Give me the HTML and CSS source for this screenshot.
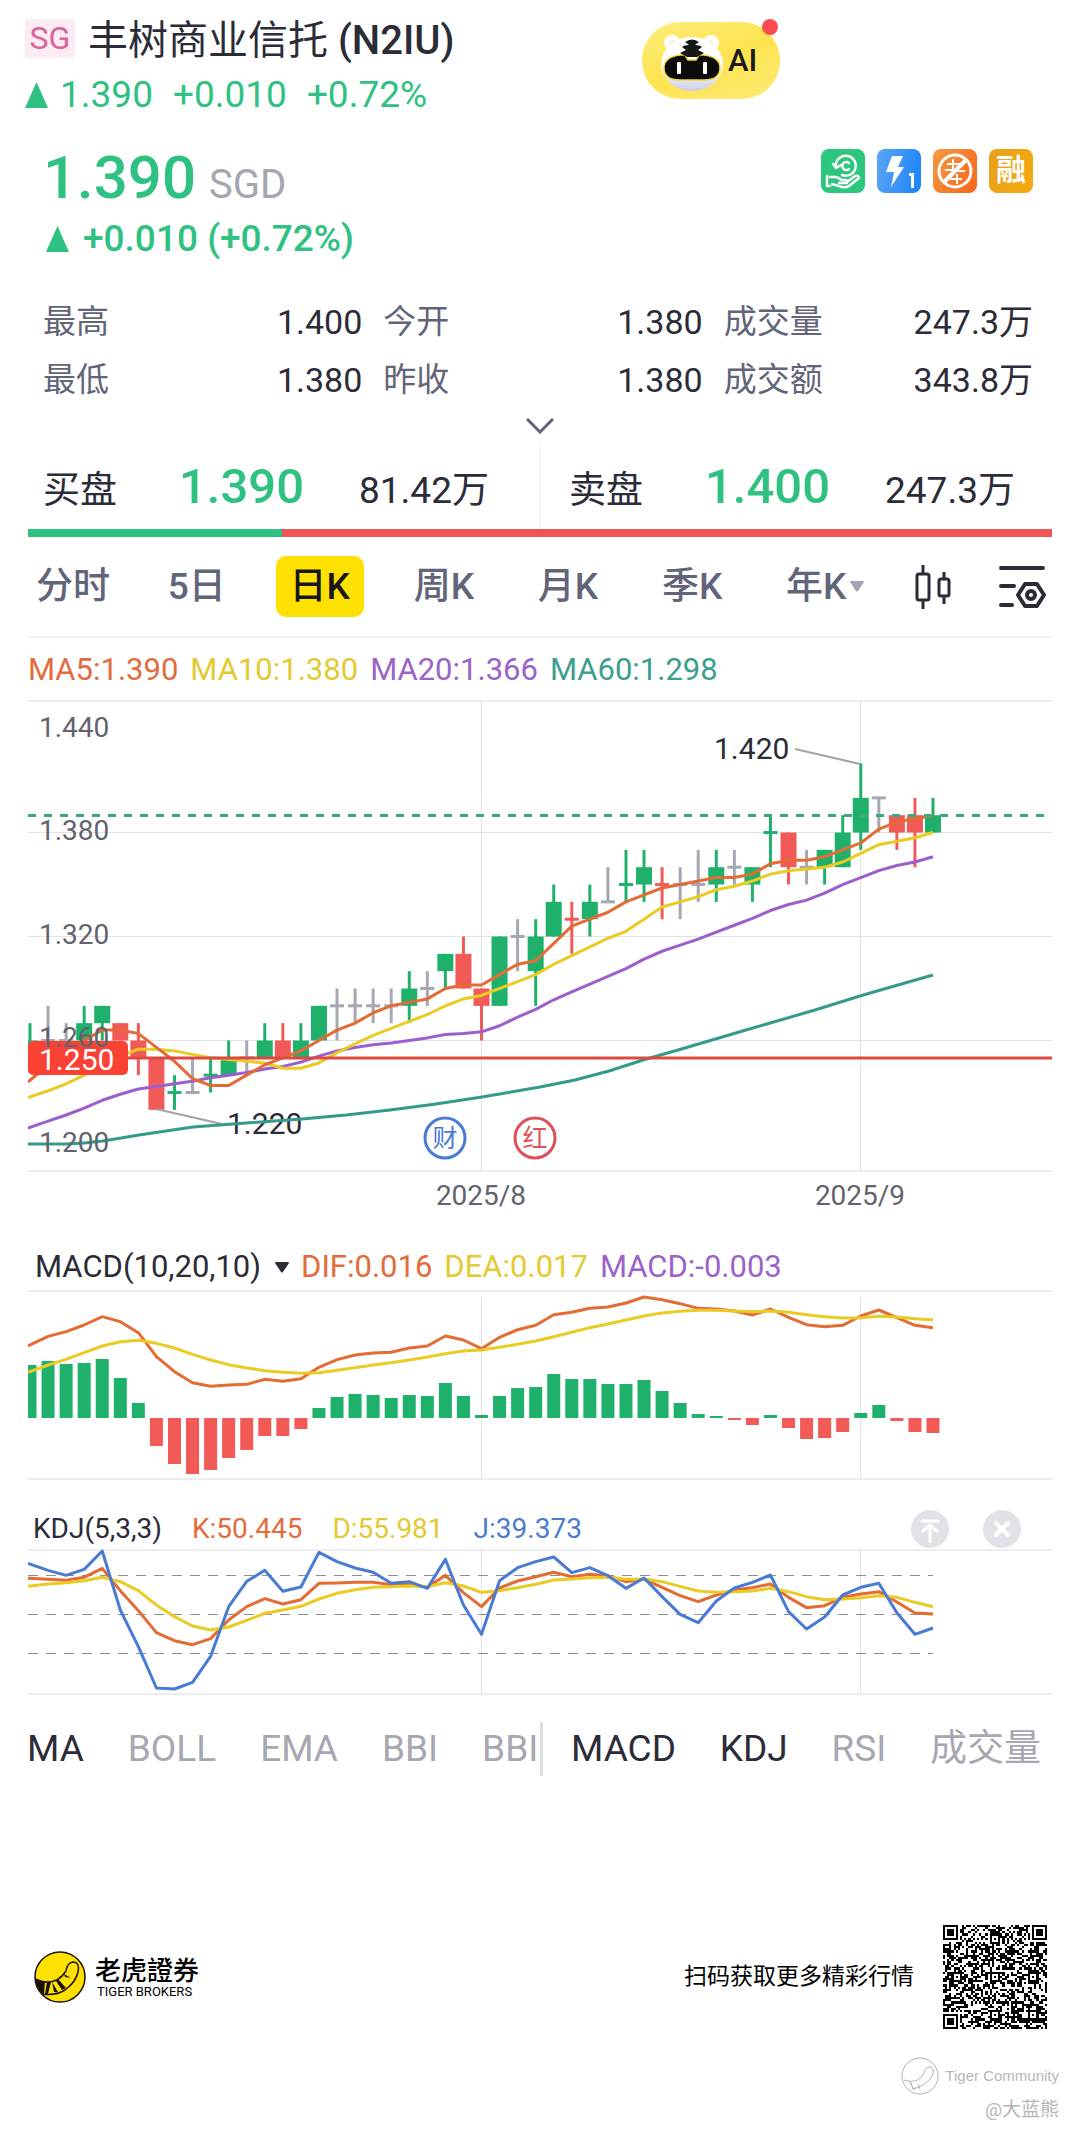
FILE: index.html
```html
<!DOCTYPE html>
<html lang="zh-CN">
<head>
<meta charset="utf-8">
<meta name="viewport" content="width=device-width, initial-scale=1">
<title>丰树商业信托 (N2IU)</title>
<link rel="stylesheet" href="styles.css">
</head>
<body>
<header class="header">
  <div class="header-info">
    <div class="title-row">
      <span class="market">SG</span>
      <h1 class="title">丰树商业信托 <b>(N2IU)</b></h1>
    </div>
    <div class="ticker up">
      <svg class="arrow" viewBox="0 0 23 26" aria-hidden="true"><path d="M11.500 0 23 26H0z"/></svg>
      <span>1.390</span><span>+0.010</span><span>+0.72%</span>
    </div>
  </div>
  <button class="ai" type="button">
    <svg class="ai-bear" viewBox="0 0 64 64" aria-hidden="true">
      <defs>
        <linearGradient id="fur" x1="0" y1="0" x2="0" y2="1"><stop offset="0.500" stop-color="#fff"/><stop offset="1" stop-color="#cfcde6"/></linearGradient>
      </defs>
      <circle cx="12" cy="14" r="8" fill="#fff"/><circle cx="51" cy="14" r="8" fill="#fff"/>
      <circle cx="13" cy="15" r="4" fill="#f6f2e2"/><circle cx="50" cy="15" r="4" fill="#f6f2e2"/>
      <ellipse cx="32" cy="35" rx="31" ry="27" fill="url(#fur)"/>
      <path d="M20 26h5l3 5h8l3-5h5q16 2 16 13 0 12-16 12H20Q4 51 4 39q0-11 16-13z" fill="#0b0b0b" stroke="#f0d93a" stroke-width="1.500"/>
      <path d="M25 13q7-5 14 0l-4 3q5 0 7 2l-4 3 6 3-7 4H27l-7-4 6-3-4-3q2-2 7-2z" fill="#161616"/>
      <rect x="17" y="33" width="4" height="12" rx="1" fill="#fff"/><rect x="43" y="33" width="4" height="12" rx="1" fill="#fff"/>
    </svg>
    <span>AI</span>
    <i class="dot"></i>
  </button>
</header>

<main>
  <section class="quote">
    <div>
      <div class="price up"><span>1.390</span><small>SGD</small></div>
      <div class="change up">
        <svg class="arrow" viewBox="0 0 23 26" aria-hidden="true"><path d="M11.500 0 23 26H0z"/></svg>
        <span>+0.010 (+0.72%)</span>
      </div>
    </div>
    <div class="badges">
      <span class="badge badge-green"><svg viewBox="0 0 44 44" fill="none" stroke="#fff" stroke-width="2.500" stroke-linecap="round" stroke-linejoin="round"><path d="M15 19a10 10 0 1 1 6 7M12 15l3 4 5-3"/><path d="M28 14a4 4 0 1 0 0 6"/><path d="M6 27v10h3M9 28h5q4 0 6 3h4q3 0 2 3h-8M26 33l8-6q4-1 4 2L28 37q-3 2-7 1l-10-3"/></svg></span>
      <span class="badge badge-blue"><svg viewBox="0 0 44 44"><path d="M15 7h11l-5 11h6L14 38l3-15H9z" fill="#fff"/><path d="M32 24h5v15h-3V27h-2z" fill="#fff"/></svg></span>
      <span class="badge badge-orange"><svg viewBox="0 0 44 44" fill="none" stroke="#fff" stroke-width="3"><path d="M14 15h14M12 21h8M25 22h7M20 10v12M17 30h12M24 25v10" stroke-width="2"/><circle cx="22" cy="22" r="16"/><path d="M33 11 11 33" stroke-width="4"/></svg></span>
      <span class="badge badge-gold">融</span>
    </div>
  </section>

  <dl class="stats">
    <div><dt>最高</dt><dd>1.400</dd></div>
    <div><dt>今开</dt><dd>1.380</dd></div>
    <div><dt>成交量</dt><dd>247.3万</dd></div>
    <div><dt>最低</dt><dd>1.380</dd></div>
    <div><dt>昨收</dt><dd>1.380</dd></div>
    <div><dt>成交额</dt><dd>343.8万</dd></div>
  </dl>
  <button class="expand" type="button" aria-label="展开">
    <svg viewBox="0 0 28 16" width="28" height="16"><path d="M1 1l13 13L27 1" fill="none" stroke="#62647a" stroke-width="3"/></svg>
  </button>

  <section class="book">
    <div class="side"><span>买盘</span><strong class="up">1.390</strong><span>81.42万</span></div>
    <div class="side"><span>卖盘</span><strong class="up">1.400</strong><span>247.3万</span></div>
  </section>
  <div class="ratio"><span class="ratio-buy"></span><span class="ratio-sell"></span></div>

  <nav class="periods">
    <button type="button">分时</button>
    <button type="button">5日</button>
    <button type="button" class="active">日K</button>
    <button type="button">周K</button>
    <button type="button">月K</button>
    <button type="button">季K</button>
    <button type="button">年K<svg class="caret" viewBox="0 0 14 11" aria-hidden="true"><path d="M1 0h12q1 0 1 1L8 10q-1 1-2 0L0 1q0-1 1-1z" fill="#a3a4b0"/></svg></button>
    <button type="button" class="tool" aria-label="K线样式"><svg viewBox="0 0 38 44" width="38" height="44" fill="none" stroke="#2b2c38" stroke-width="3"><rect x="3" y="9" width="12" height="26" rx="2"/><path d="M9 0v9M9 35v9M30 7v7M30 31v8"/><rect x="25" y="14" width="10" height="17" rx="2"/></svg></button>
    <button type="button" class="tool" aria-label="图表设置"><svg viewBox="0 0 48 46" width="48" height="46" fill="none" stroke="#2b2c38" stroke-width="4" stroke-linecap="round" stroke-linejoin="round"><path d="M3 4h42M3 22h13M3 41h11"/><path d="M27 20h12l7 11-7 11H27l-7-11z"/><circle cx="33" cy="31" r="4"/></svg></button>
  </nav>

  <div class="legend legend-ma">
    <span class="c-orange">MA5:1.390</span><span class="c-yellow">MA10:1.380</span><span class="c-purple">MA20:1.366</span><span class="c-teal">MA60:1.298</span>
  </div>
  <svg class="chart" id="kline" viewBox="28 700 1024 549">
    <path class="grid" d="M28 832.500H1052M28 936.500H1052M28 1040.500H1052M481.500 701V1171M860.500 701V1171"/>
    <path class="frame" d="M28 701H1052M28 1171H1052"/>
    <g id="candles"></g>
    <g class="extreme"><path d="M795 749 860 764M156 1109 222 1124"/><text x="714" y="759">1.420</text><text x="227" y="1134">1.220</text></g>
    <g id="averages"></g>
    <path class="last" d="M28 815.500H1045"/>
    <path class="alert" d="M28 1058H1052"/>
    <rect x="28" y="1041" width="100" height="34" rx="5" fill="#fa4234"/>
    <g class="axis"><text x="39" y="737">1.440</text><text x="39" y="840">1.380</text><text x="39" y="944">1.320</text><text x="39" y="1047">1.260</text><text x="39" y="1152">1.200</text></g>
    <text class="tag" x="39" y="1070">1.250</text>
    <g class="axis date"><text x="481" y="1205">2025/8</text><text x="860" y="1205">2025/9</text></g>
    <g class="event event-blue"><circle cx="445" cy="1138" r="20"/><text x="445" y="1147">财</text></g>
    <g class="event event-red"><circle cx="535" cy="1138" r="20"/><text x="535" y="1147">红</text></g>
  </svg>

  <div class="legend legend-macd">
    <button type="button" class="indicator">MACD(10,20,10)<svg class="caret" viewBox="0 0 14 11" aria-hidden="true"><path d="M1 0h12q1 0 1 1L8 10q-1 1-2 0L0 1q0-1 1-1z" fill="#2b2c38"/></svg></button>
    <span class="c-orange">DIF:0.016</span><span class="c-yellow">DEA:0.017</span><span class="c-purple">MACD:-0.003</span>
  </div>
  <svg class="chart" id="macd" viewBox="28 1285 1024 225">
    <path class="grid" d="M481.500 1297V1479M860.500 1297V1479"/>
    <path class="frame" d="M28 1291H1052M28 1479H1052"/>
    <g id="macd-data"></g>
  </svg>

  <div class="legend legend-kdj">
    <span class="c-dark">KDJ(5,3,3)</span><span class="c-orange">K:50.445</span><span class="c-yellow">D:55.981</span><span class="c-blue">J:39.373</span>
    <div class="actions">
      <button type="button" aria-label="置顶"><svg viewBox="0 0 38 38"><circle cx="19" cy="19" r="19" fill="#e1e1e7"/><path d="M11 11h16M19 32V16M12 21l7-6 7 6" fill="none" stroke="#fff" stroke-width="3" stroke-linecap="round"/></svg></button>
      <button type="button" aria-label="关闭"><svg viewBox="0 0 38 38"><circle cx="19" cy="19" r="19" fill="#e1e1e7"/><path d="M13 13l12 12M25 13 13 25" fill="none" stroke="#fff" stroke-width="4" stroke-linecap="round"/></svg></button>
    </div>
  </div>
  <svg class="chart" id="kdj" viewBox="28 1548 1024 174">
    <path class="grid" d="M481.500 1551V1695M860.500 1551V1695"/>
    <path class="frame" d="M28 1550H1052M28 1694H1052"/>
    <path class="level" d="M28 1575.500H933M28 1614.500H933M28 1653.500H933"/>
    <g id="kdj-data"></g>
  </svg>

  <nav class="indicators">
    <div class="main-set">
      <button type="button" class="on">MA</button><button type="button">BOLL</button><button type="button">EMA</button><button type="button">BBI</button><button type="button">BBI</button>
    </div>
    <div class="sub-set">
      <button type="button" class="on">MACD</button><button type="button" class="on">KDJ</button><button type="button">RSI</button><button type="button">成交量</button>
    </div>
  </nav>
</main>

<footer class="footer">
  <svg class="logo" viewBox="0 0 52 52" aria-hidden="true">
    <circle cx="26" cy="26" r="25" fill="#ffe100" stroke="#1b1200" stroke-width="1.500"/>
    <path d="M2 29Q22 36 32 20q1-8 7-9 7 0 5 10-2 10-13 18-10 6-22 4-5-6-7-14z" fill="#ffe100" stroke="#1b1200" stroke-width="1.500"/>
    <path d="M1 27l10 4-1 12q-7-7-9-16zM13 31l4 0-3 12h-3zM18 31l6 10h-4zM24 28l8 9-4 2-6-9zM30 23l7 4-6-1z" fill="#1b1200"/>
  </svg>
  <div class="brand"><b>老虎證券</b><span>TIGER BROKERS</span></div>
  <p class="scan">扫码获取更多精彩行情</p>
  <svg class="qr" id="qr" viewBox="0 0 49 49" shape-rendering="crispEdges" role="img" aria-label="二维码"></svg>
</footer>
<div class="community">
  <div class="community-name">
    <svg viewBox="0 0 38 38" fill="none" stroke="#b0b0b0" stroke-width="1"><circle cx="19" cy="19" r="18"/><path d="M3 23q14 5 20-7 2-7 7-6 4 2 1 9-4 9-19 13l-2-6M17 27l2 5M13 33l-4-8"/></svg>
    <span>Tiger Community</span>
  </div>
  <span class="author">@大蓝熊</span>
</div>
<script src="chart.js"></script>
</body>
</html>
```
FILE: styles.css
```css
* { box-sizing: border-box; }

body {
  margin: 0;
  background: #fff;
  color: #2b2c38;
  font-family: Roboto, "Noto Sans CJK SC", sans-serif;
}

button {
  margin: 0;
  padding: 0;
  border: 0;
  background: none;
  color: inherit;
  font: inherit;
}

svg { display: block; }
h1, p, dl, dd { margin: 0; }

.up { color: #2fc182; }
.arrow { width: 23px; height: 26px; fill: #2fc182; }

.header {
  display: flex;
  justify-content: space-between;
  align-items: flex-start;
  padding: 16px 300px 0 25px;
}
.title-row { display: flex; align-items: center; gap: 13px; height: 50px; }
.market {
  width: 50px;
  height: 39px;
  margin-bottom: 6px;
  border-radius: 4px;
  background: #fdebf3;
  color: #d8649b;
  font-size: 32px;
  line-height: 39px;
  text-align: center;
}
.title { font-size: 40px; line-height: 50px; font-weight: 400; white-space: nowrap; }
.title b { font-weight: 500; }
.ticker {
  display: flex;
  align-items: center;
  gap: 20px;
  margin-top: 8px;
  font-size: 37px;
  line-height: 42px;
}
.ticker .arrow { margin-right: -8px; }

.ai {
  position: relative;
  display: flex;
  align-items: center;
  gap: 4px;
  width: 138px;
  height: 77px;
  margin-top: 6px;
  padding-left: 18px;
  border-radius: 38px;
  background: linear-gradient(160deg, #fdee7d, #fee450 50%, #fdea74);
  color: #1b1b1f;
  font-size: 31px;
  font-weight: 500;
}
.ai-bear { width: 64px; height: 64px; }
.dot {
  position: absolute;
  top: -3px;
  right: 2px;
  width: 16px;
  height: 16px;
  border-radius: 50%;
  background: #fb4a50;
}

.quote {
  display: flex;
  justify-content: space-between;
  align-items: flex-start;
  padding: 26px 47px 0 43px;
}
.price { display: flex; align-items: baseline; gap: 13px; height: 72px; font-size: 60px; line-height: 72px; font-weight: 500; }
.price small { color: #a4a6b0; font-size: 40px; font-weight: 400; }
.change {
  display: flex;
  align-items: center;
  gap: 14px;
  margin-top: 4px;
  padding-left: 3px;
  font-size: 37px;
  line-height: 42px;
  font-weight: 500;
}
.badges { display: flex; gap: 12px; padding-top: 7px; }
.badge {
  width: 44px;
  height: 44px;
  border-radius: 8px;
  color: #fff;
  font-size: 30px;
  line-height: 42px;
  font-weight: 700;
  text-align: center;
}
.badge-green { background: #2cc67c; }
.badge-blue { background: linear-gradient(100deg, #5ba5f4, #1b83fa); }
.badge-orange { background: linear-gradient(120deg, #f49a41, #f9651c); }
.badge-gold { background: linear-gradient(120deg, #e8a01c, #f5ab0c); }

.stats {
  display: grid;
  grid-template-columns: 319fr 319fr 309fr;
  gap: 18px 21px;
  padding: 42px 47px 0 43px;
  font-size: 33px;
  line-height: 40px;
}
.stats div { display: flex; justify-content: space-between; height: 40px; }
.stats dt { color: #62647a; }
.stats dd { font-size: 34px; }

.expand { display: flex; justify-content: center; align-items: center; width: 100%; height: 40px; margin-top: 6px; }

.book { display: grid; grid-template-columns: 1fr 1fr; height: 83px; }
.side {
  display: grid;
  grid-template-columns: 136px 180px 1fr;
  align-items: baseline;
  padding: 13px 0 0 29px;
  font-size: 37px;
  line-height: 56px;
}
.side:first-child { padding-left: 43px; border-right: 1px solid #efeff2; }
.side strong { font-size: 49px; font-weight: 500; }

.ratio { display: flex; height: 8px; margin: 0 28px; }
.ratio-buy { flex: 254; background: #2fc182; }
.ratio-sell { flex: 770; background: #ef5757; }

.periods {
  display: flex;
  justify-content: space-between;
  align-items: center;
  margin: 0 28px;
  padding: 19px 0;
  border-bottom: 2px solid #f1f1f3;
  color: #62647a;
  font-size: 37px;
  line-height: 61px;
  font-weight: 500;
}
.periods button { display: flex; align-items: center; gap: 4px; height: 61px; padding: 0 14px; }
.periods button:first-child { padding: 0 8px; }
.periods .active { border-radius: 10px; background: #ffe100; color: #17171c; }
.periods .tool { padding: 0; }
.periods .tool:last-child { margin: 0 6px 0 10px; }
.caret { width: 14px; height: 11px; }

.legend { display: flex; align-items: center; padding: 0 28px; white-space: nowrap; }
.legend-ma { gap: 12px; padding-top: 14px; padding-bottom: 12px; font-size: 31px; line-height: 36px; }
.legend-macd { gap: 12px; padding-left: 35px; font-size: 31px; line-height: 36px; }
.legend-kdj { gap: 30px; padding-left: 33px; padding-right: 59px; font-size: 28px; line-height: 38px; }
.indicator { display: flex; align-items: center; gap: 14px; }
.actions { display: flex; gap: 34px; margin-left: auto; }
.actions svg { width: 38px; height: 38px; }

.c-orange { color: #e36b3c; }
.c-yellow { color: #e3ca32; }
.c-purple { color: #9b62c8; }
.c-teal { color: #3c9f8e; }
.c-blue { color: #4d7bd0; }
.c-dark { color: #2b2c38; }

.chart { width: calc(100% - 56px); height: auto; margin: 0 28px; }
.chart path, .chart polyline { fill: none; }
.chart .grid { stroke: #e2e2e5; stroke-width: 1; }
.chart .frame { stroke: #ededf0; stroke-width: 2; }
.chart .level { stroke: #8d8d92; stroke-width: 1; stroke-dasharray: 10 8; }
.chart .last { stroke: #3dab80; stroke-width: 3; stroke-dasharray: 8 8; }
.chart .alert { stroke: #dc4940; stroke-width: 3; }
.chart .line { stroke-width: 3; stroke-linejoin: round; }
.line-orange { stroke: #e36b34; }
.line-yellow { stroke: #e9cb24; }
.line-purple { stroke: #9b5fcd; }
.line-teal { stroke: #349a89; }
.line-blue { stroke: #4a7bd3; }
.chart .rise { fill: #1fb16c; stroke: #1fb16c; }
.chart .fall { fill: #f25a57; stroke: #f25a57; }
.chart .flat { fill: #a5a7b2; stroke: #a5a7b2; }
.chart .wick { stroke-width: 3; }
.chart .body { stroke: none; }
.axis { fill: #62636e; font-size: 28px; }
.date { text-anchor: middle; }
.extreme { fill: #2b2c38; font-size: 30px; }
.extreme path { stroke: #a3a3a6; stroke-width: 2; }
.tag { fill: #fff; font-size: 30px; }
.event { font-size: 25px; text-anchor: middle; }
.event circle { fill: #fff; stroke-width: 3; }
.event-blue { fill: #4a7bd3; }
.event-blue circle { stroke: #4a7bd3; }
.event-red { fill: #dd5057; }
.event-red circle { stroke: #dd5057; }

.indicators {
  display: grid;
  grid-template-columns: 1fr 1fr;
  align-items: center;
  height: 54px;
  color: #a6a7b0;
  font-size: 37px;
  line-height: 54px;
}
.indicators .on { color: #2b2c38; }
.main-set {
  display: flex;
  gap: 44px;
  height: 54px;
  margin-right: -3px;
  padding-left: 27px;
  border-right: 3px solid #e0e0e4;
}
.sub-set { display: flex; justify-content: space-between; height: 54px; padding: 0 39px 0 31px; }

.footer { display: flex; align-items: center; margin-top: 149px; padding: 0 33px 0 34px; color: #000; }
.logo { width: 52px; height: 52px; }
.brand { display: flex; flex-direction: column; margin-left: 9px; font-size: 13px; line-height: 16px; }
.brand b { font-family: "Noto Sans CJK TC", sans-serif; font-size: 26px; line-height: 30px; font-weight: 500; }
.brand span { padding-left: 2px; }
.scan { margin-left: auto; font-size: 23px; line-height: 30px; }
.qr { width: 104px; height: 104px; margin-left: 29px; }

.community {
  display: flex;
  flex-direction: column;
  align-items: flex-end;
  padding: 28px 21px 10px;
  color: #b5b5b5;
}
.community-name { display: flex; align-items: center; gap: 6px; font-family: "Liberation Sans", sans-serif; font-size: 15px; line-height: 38px; }
.community-name svg { width: 38px; height: 38px; }
.author { font-size: 19px; line-height: 30px; }
```
FILE: chart.js
```js
const NS = "http://www.w3.org/2000/svg";
const xAt = i => 30 + i * 18.06;
const priceY = cents => 1040.5 - (cents - 26) * 17.33;

function add(parent, name, attrs) {
  const el = document.createElementNS(NS, name);
  for (const key in attrs) el.setAttribute(key, attrs[key]);
  document.getElementById(parent).appendChild(el);
}

function line(parent, color, points) {
  add(parent, "polyline", { class: "line line-" + color, points: points.map(p => p.join(",")).join(" ") });
}

// Open, close, high and low, in cents above 1.00; the letter is the colour.
const candles = [
  "g 25 26 27 25", "n 26 26 28 25", "n 26 26 27 25", "g 26 27 28 26", "g 27 28 28 26", "r 27 26 27 26",
  "r 26 25 27 24", "r 25 22 25 22", "g 23 23 24 22", "n 23 23 25 23", "g 24 24 25 23", "g 24 25 26 24",
  "n 25 25 26 24", "g 25 26 27 25", "r 26 25 27 25", "g 25 26 27 25", "g 26 28 28 26", "n 28 28 29 26",
  "n 28 28 29 27", "n 28 28 29 27", "n 28 28 29 27", "g 28 29 30 27", "n 29 29 30 28", "g 30 31 31 29",
  "r 31 29 32 29", "r 29 28 29 26", "g 28 32 32 28", "n 32 32 33 30", "g 30 32 33 28", "g 32 34 35 32",
  "r 33 33 34 31", "g 33 34 35 32", "n 34 34 36 34", "g 35 35 37 34", "g 35 36 37 34", "r 35 35 36 33",
  "n 35 35 36 33", "n 35 35 37 34", "g 35 36 37 34", "n 36 36 37 35", "g 35 36 36 34", "g 38 38 39 36",
  "r 38 36 38 35", "n 36 36 37 35", "g 36 37 37 35", "g 36 38 39 36", "g 38 40 42 37", "n 40 40 40 38",
  "r 39 38 39 37", "r 39 38 40 36", "g 38 39 40 38"
].map(row => row.split(" "));

const kinds = { g: "rise", r: "fall", n: "flat" };
candles.forEach(([kind, open, close, high, low], i) => {
  const x = xAt(i);
  const cls = kinds[kind];
  add("candles", "path", { class: "wick " + cls, d: `M${x} ${priceY(high)}V${priceY(low)}` });
  if (open === close) {
    add("candles", "path", { class: "wick " + cls, d: `M${x - 7} ${priceY(open)}H${x + 7}` });
  } else {
    const top = priceY(Math.max(open, close));
    const left = Math.max(28, x - 8);
    add("candles", "rect", { class: "body " + cls, x: left, y: top, width: x + 8 - left, height: priceY(Math.min(open, close)) - top });
  }
});

const earlier = [18, 19, 19, 19, 19, 19, 19, 20, 20, 20, 22, 22, 22, 22, 21, 21, 22, 24, 25];
const closes = earlier.concat(candles.map(c => Number(c[2])));
[[60, "teal"], [20, "purple"], [10, "yellow"], [5, "orange"]].forEach(([span, color]) => {
  if (span === 60) {
    line("averages", color, [[28, 1144], [66, 1144], [84, 1143], [103, 1141], [139, 1135], [193, 1127], [233, 1124],
      [302, 1119], [346, 1115], [390, 1110], [436, 1104], [482, 1097], [540, 1087], [575, 1080], [609, 1071],
      [643, 1060], [678, 1050], [746, 1030], [815, 1010], [860, 996], [884, 989], [933, 975]]);
    return;
  }
  line("averages", color, candles.map((_, i) => {
    const end = i + earlier.length + 1;
    const sum = closes.slice(end - span, end).reduce((a, b) => a + b, 0);
    return [i ? xAt(i) : 28, priceY(sum / span)];
  }));
});

const bars = [53, 57, 54, 55, 59, 40, 15, -28, -46, -56, -52, -40, -32, -18, -18, -11, 10, 21, 24, 23, 20, 23, 22, 35,
  22, 3, 22, 30, 31, 44, 39, 39, 34, 34, 38, 27, 15, 4, 2, -2, -7, 3, -10, -21, -20, -14, 5, 13, -3, -14, -15];
bars.forEach((value, i) => {
  const left = Math.max(28, xAt(i) - 6.5);
  add("macd-data", "rect", {
    class: "body " + (value > 0 ? "rise" : "fall"),
    x: left, y: value > 0 ? 1418 - value : 1418, width: xAt(i) + 6.5 - left, height: Math.abs(value)
  });
});

// Series are kept in thirds of a pixel below the top of their panel.
const series = (parent, color, top, values) =>
  line(parent, color, values.map((v, i) => [i ? xAt(i) : 28, top + v / 3]));

series("macd-data", "orange", 1230, [348, 319, 305, 285, 260, 275, 308, 380, 425, 458, 469, 465, 463, 448, 454, 446,
  412, 389, 375, 369, 367, 354, 348, 318, 330, 356, 322, 299, 286, 254, 247, 235, 231, 219, 201, 209, 221, 235, 237,
  243, 255, 237, 262, 284, 290, 286, 258, 240, 263, 286, 293]);
series("macd-data", "yellow", 1230, [427, 405, 388, 368, 348, 335, 331, 340, 354, 373, 390, 404, 414, 422, 427, 430,
  428, 421, 413, 405, 398, 390, 381, 371, 363, 360, 352, 343, 333, 320, 307, 293, 282, 270, 258, 249, 244, 241, 241,
  243, 245, 243, 247, 254, 260, 264, 263, 259, 261, 266, 269]);

series("kdj-data", "orange", 1500, [235, 238, 241, 232, 205, 272, 332, 398, 422, 434, 416, 360, 320, 296, 312, 299,
  250, 249, 247, 247, 254, 253, 262, 226, 278, 320, 264, 243, 230, 217, 230, 223, 228, 245, 238, 262, 287, 305, 285,
  270, 263, 252, 292, 323, 317, 292, 282, 275, 306, 339, 342]);
series("kdj-data", "yellow", 1500, [259, 252, 248, 242, 232, 245, 272, 315, 350, 378, 390, 381, 361, 340, 330, 319,
  297, 280, 269, 262, 260, 258, 260, 248, 258, 277, 272, 263, 253, 240, 237, 233, 232, 238, 237, 245, 259, 273, 277,
  275, 273, 265, 275, 290, 299, 297, 293, 287, 292, 307, 320]);
series("kdj-data", "blue", 1500, [190, 211, 226, 208, 153, 330, 440, 564, 567, 547, 469, 320, 244, 211, 274, 261, 157,
  185, 204, 217, 250, 245, 265, 178, 315, 403, 242, 203, 185, 171, 218, 203, 227, 265, 234, 290, 343, 368, 303, 264,
  247, 225, 335, 387, 351, 285, 262, 250, 338, 403, 384]);

// QR symbol: finder and alignment squares over the data modules.
const size = 49;
const anchors = [[3, 3, 4], [45, 3, 4], [3, 45, 4], [24, 6, 2], [6, 24, 2], [24, 24, 2], [42, 24, 2], [24, 42, 2], [42, 42, 2]];
let seed = 20259;
let modules = "";
for (let y = 0; y < size; y++) {
  for (let x = 0; x < size; x++) {
    seed = (seed * 1103515245 + 12345) % 2147483648;
    let dark = seed / 2147483648 < 0.52;
    if (x === 6 || y === 6) dark = (x + y) % 2 === 0;
    for (const [cx, cy, reach] of anchors) {
      const d = Math.max(Math.abs(x - cx), Math.abs(y - cy));
      if (d <= reach) dark = reach === 4 ? d !== 2 && d !== 4 : d !== 1;
    }
    if (dark) modules += `M${x} ${y}h1v1h-1z`;
  }
}
add("qr", "path", { d: modules });
```
